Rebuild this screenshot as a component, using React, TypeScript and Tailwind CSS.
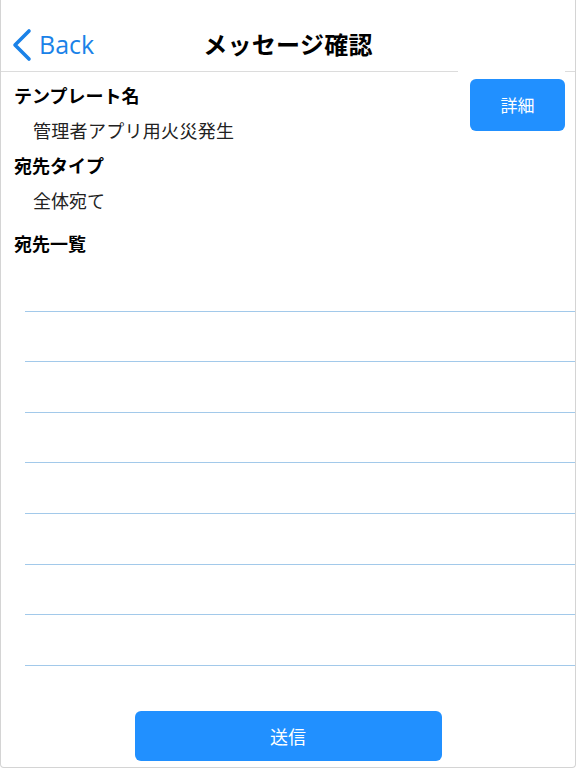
import React from "react";

export default function App() {
  const rows = Array.from({ length: 8 });
  return (
    <div
      className="relative w-[576px] h-[768px] bg-white overflow-hidden border-x border-b border-[#d4d4d4] rounded-b-[4px] flex flex-col"
      style={{ fontFamily: '"Noto Sans CJK JP", "Noto Sans", sans-serif' }}
    >
      {/* Nav bar */}
      <div className="relative h-[72px] shrink-0 flex items-center pt-[18px] border-b border-[#dcdcdc]">
        <div className="flex items-center pl-[10px] text-[#1a82e8]">
          <svg width="22" height="34" viewBox="0 0 22 34" className="mt-[1px]">
            <path d="M18 3 L4 17 L18 31" fill="none" stroke="#1a82e8" strokeWidth="3.6" strokeLinecap="round" strokeLinejoin="round" />
          </svg>
          <span className="ml-[6px] text-[25px] leading-none" style={{ fontFamily: '"Open Sans", "Noto Sans", sans-serif' }}>Back</span>
        </div>
        <div className="absolute left-0 right-0 bottom-[2px] top-[18px] flex items-center justify-center pointer-events-none">
          <span className="text-[24px] font-bold text-black tracking-[0.3px]">メッセージ確認</span>
        </div>
      </div>

      {/* Content */}
      <div className="relative flex-1 flex flex-col">
        <div className="absolute right-[10px] top-[-1px] w-[107px] h-[60px] bg-white flex items-start justify-end pt-[8px]">
          <button className="w-[95px] h-[52px] rounded-[6px] bg-[#2190ff] text-white text-[17px] flex items-center justify-center">
            詳細
          </button>
        </div>

        <div className="pt-[11px] pl-[13px] text-black">
          <div className="h-[24px] leading-[24px] text-[18px] font-bold">テンプレート名</div>
          <div className="h-[46px] leading-[46px] text-[18px] pl-[19px] text-[#222] tracking-[0.3px]">管理者アプリ用火災発生</div>
          <div className="h-[24px] leading-[24px] text-[18px] font-bold">宛先タイプ</div>
          <div className="h-[46px] leading-[46px] text-[18px] pl-[19px] text-[#222]">全体宛て</div>
          <div className="h-[24px] leading-[24px] text-[18px] font-bold mt-[8px]">宛先一覧</div>
        </div>

        <div className="mt-[6px] pl-[24px] flex flex-col">
          {rows.map((_, i) => (
            <div key={i} className="h-[50.6px] border-b border-[#a2c9ea]" />
          ))}
        </div>

        <div className="flex-1" />
        <div className="flex justify-center pb-[6px]">
          <button className="w-[307px] h-[50px] rounded-[6px] bg-[#2190ff] text-white text-[18px] flex items-center justify-center">
            送信
          </button>
        </div>
      </div>
    </div>
  );
}
